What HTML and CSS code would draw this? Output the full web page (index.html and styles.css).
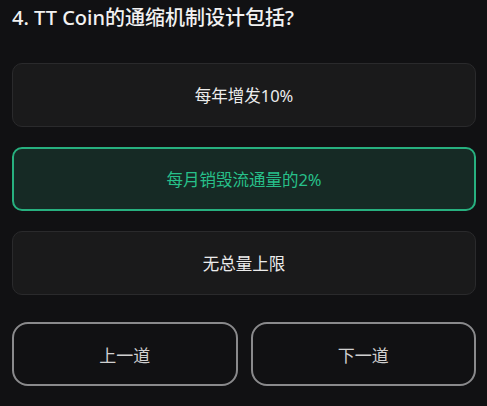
FILE: index.html
```html
<!DOCTYPE html>
<html lang="zh-CN">
<head>
<meta charset="UTF-8">
<meta name="viewport" content="width=device-width, initial-scale=1.0">
<title>TT Coin 测验</title>
<link rel="stylesheet" href="styles.css">
</head>
<body>
<div class="quiz">
  <h2 class="question">4. TT Coin的通缩机制设计包括?</h2>
  <div class="options">
    <div class="option">每年增发10%</div>
    <div class="option selected">每月销毁流通量的2%</div>
    <div class="option">无总量上限</div>
  </div>
  <div class="nav">
    <button class="nav-btn">上一道</button>
    <button class="nav-btn">下一道</button>
  </div>
</div>
</body>
</html>
```

FILE: styles.css
```css
body {
  margin: 0;
  padding: 0;
  background-color: #111113;
  color: #fff;
  font-family: "Noto Sans", "Noto Sans CJK SC", sans-serif;
}

.quiz {
  padding: 0 11px 0 12px;
}

.question {
  margin: 0;
  padding-top: 4px;
  font-size: 20px;
  font-weight: 500;
  line-height: 28px;
  color: #f2f2f2;
}

.options {
  display: flex;
  flex-direction: column;
  gap: 20px;
  margin-top: 31px;
}

.option {
  box-sizing: border-box;
  height: 64px;
  display: flex;
  justify-content: center;
  align-items: center;
  background-color: #1a1a1b;
  border: 1px solid #2a2a2c;
  border-radius: 10px;
  font-size: 16.5px;
  color: #ececec;
}

.option.selected {
  background-color: #162a25;
  border: 2px solid #27b07f;
  color: #27c08a;
}

.nav {
  display: flex;
  gap: 13px;
  margin-top: 27px;
}

.nav-btn {
  flex: 1;
  height: 64px;
  background: transparent;
  border: 2px solid #8a8a8c;
  border-radius: 16px;
  font-family: "Noto Sans", "Noto Sans CJK SC", sans-serif;
  font-size: 17px;
  color: #d0d0d0;
  cursor: pointer;
}
```
